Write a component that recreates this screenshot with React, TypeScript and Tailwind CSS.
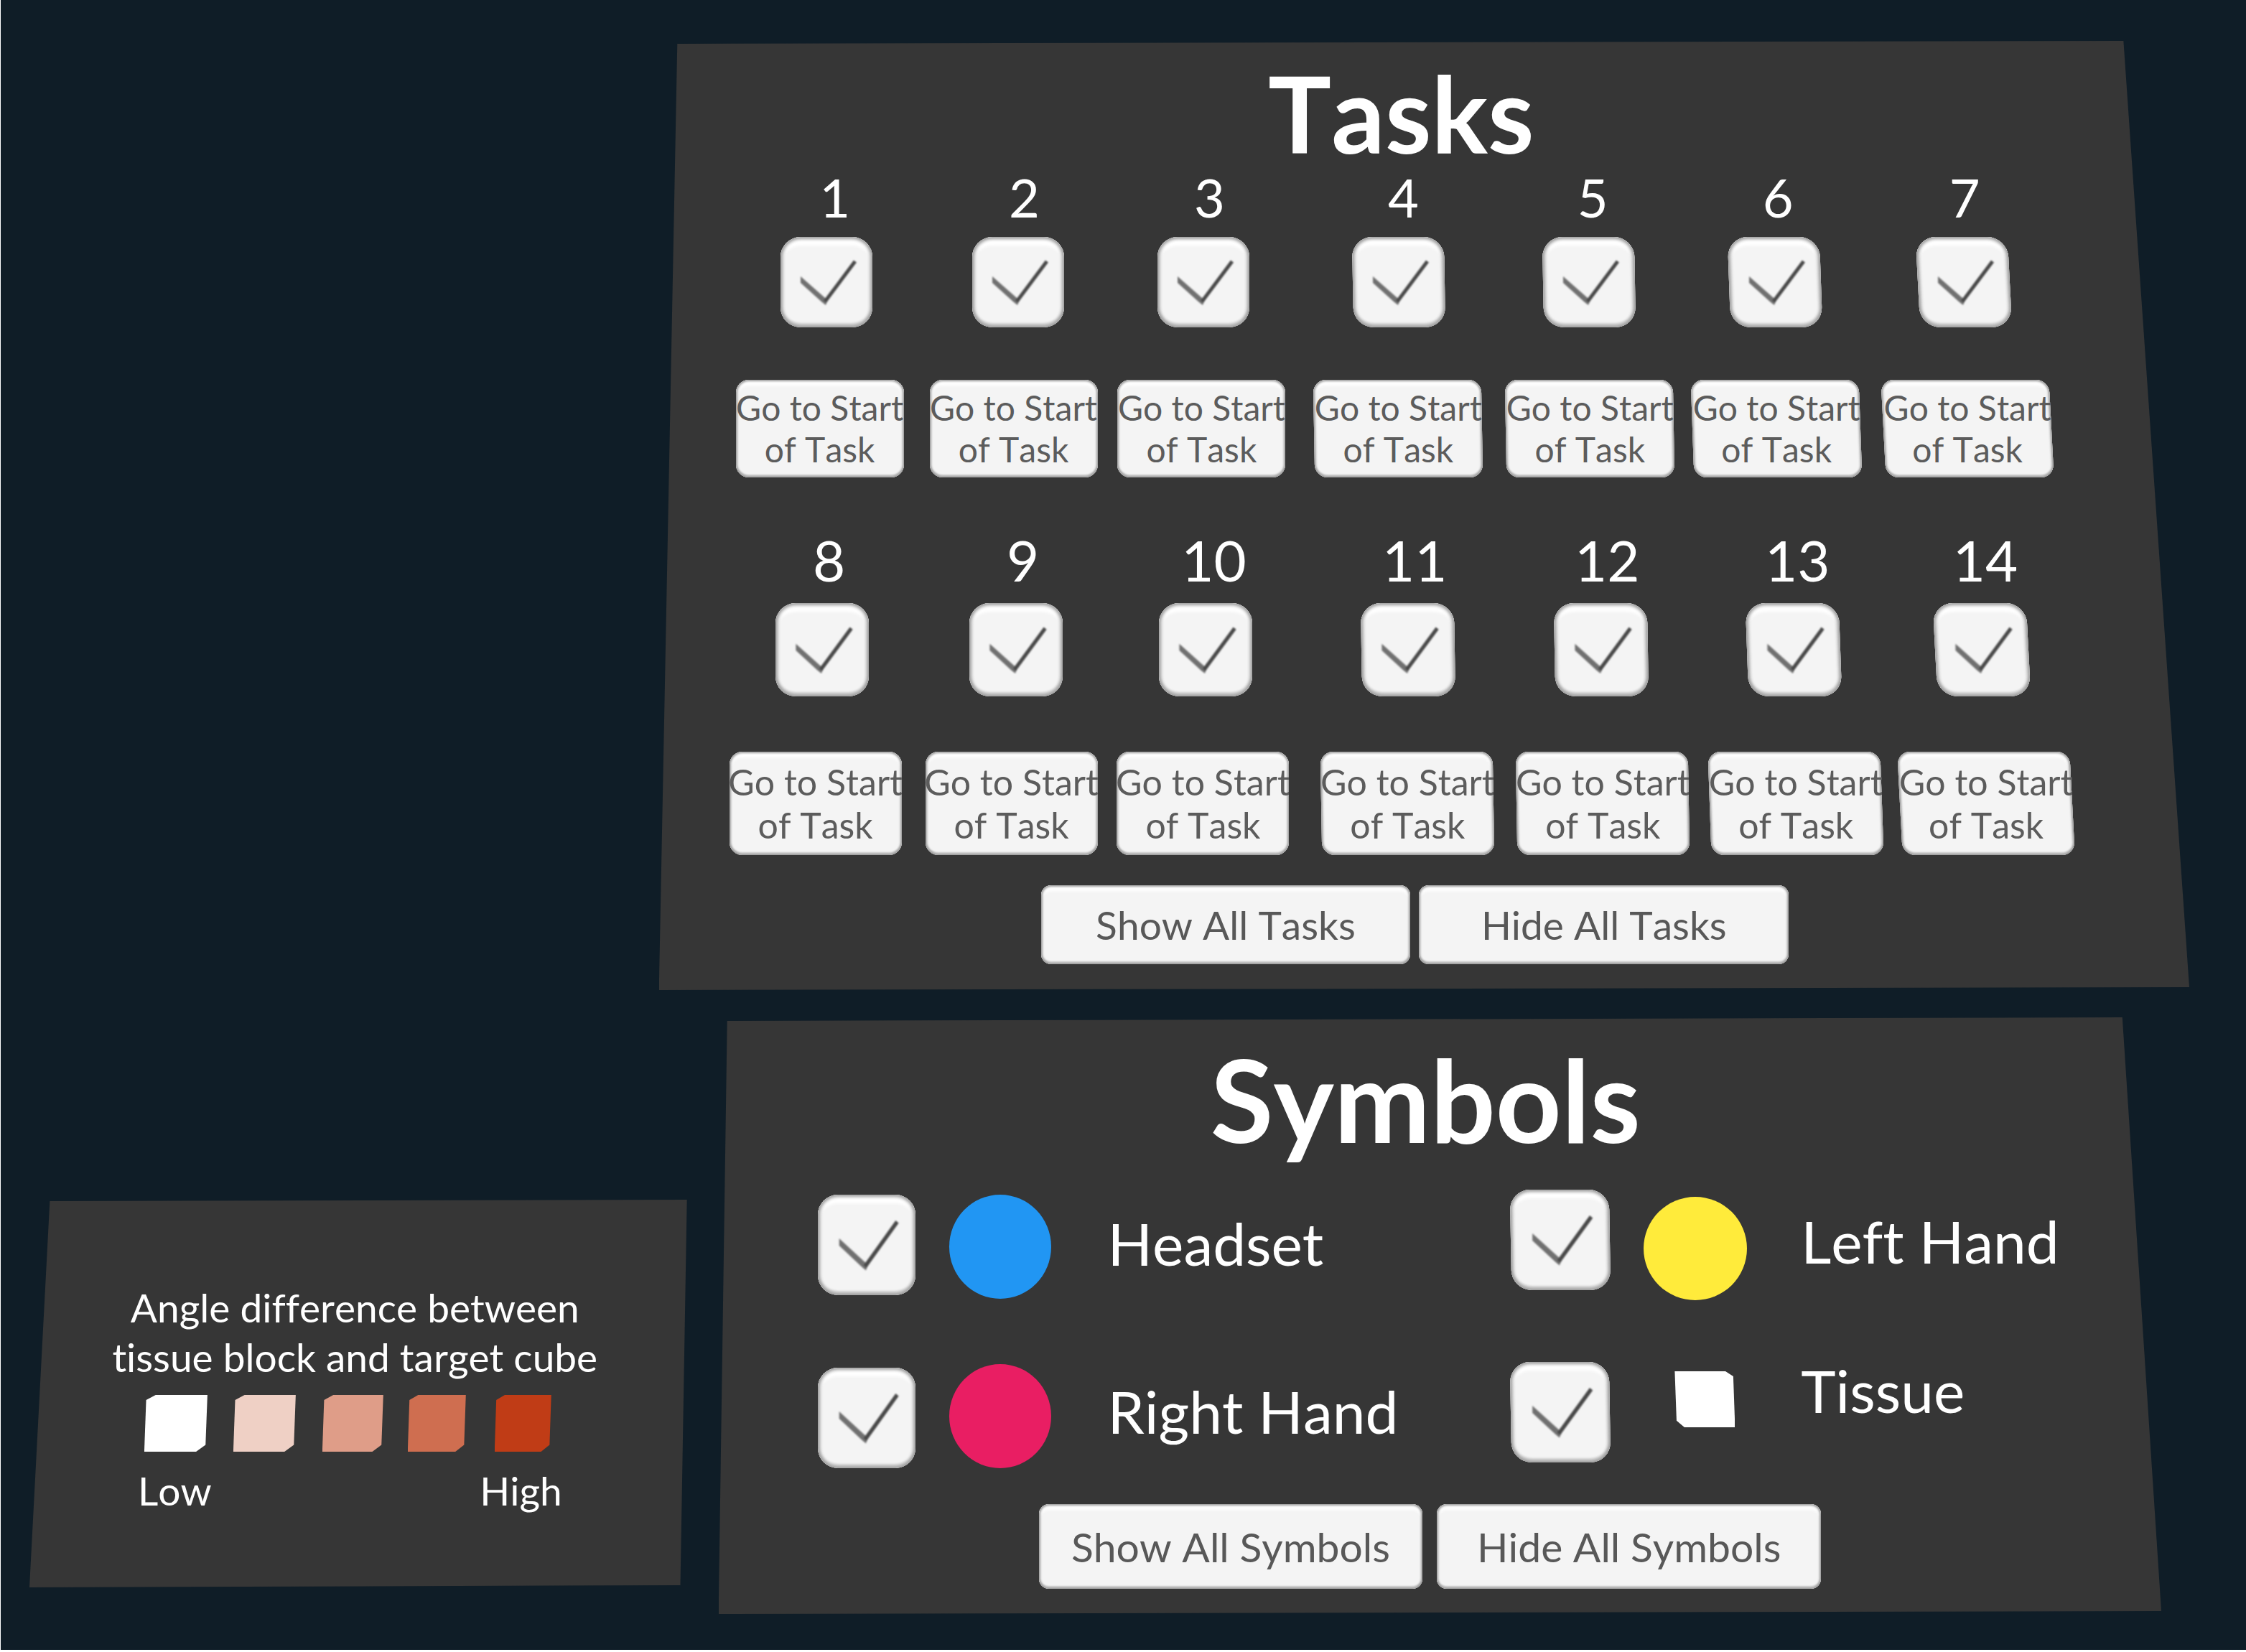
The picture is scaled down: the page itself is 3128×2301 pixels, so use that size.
import React, { useState } from "react";

const CELLS = [
  "col-start-2",
  "col-start-4",
  "col-start-6",
  "col-start-8",
  "col-start-10",
  "col-start-12",
  "col-start-14",
];

// Lean of each column's key caps, growing towards the right edge of the board.
const LEANS = [
  "skew-x-0",
  "skew-x-0",
  "skew-x-0",
  "skew-x-1",
  "skew-x-1",
  "skew-x-2",
  "skew-x-3",
];

const CAP =
  "bg-[#f4f4f4] shadow-[inset_0_0_3px_2px_#9c9c9c,inset_0_-4px_2px_#d4d4d4,inset_0_8px_4px_#ffffff]";
const SOFT_CAP =
  "bg-[#f4f4f4] shadow-[inset_0_0_4px_3px_#9c9c9c,inset_0_-6px_3px_#dcdcdc,inset_0_12px_4px_#ffffff]";

function CheckBox({
  id,
  checked,
  onChange,
  className = "",
  lean = "skew-x-0",
}: {
  id: string;
  checked: boolean;
  onChange: () => void;
  className?: string;
  lean?: string;
}) {
  return (
    <span className={`grid ${className}`}>
      <input
        id={id}
        type="checkbox"
        checked={checked}
        onChange={onChange}
        className={`col-start-1 row-start-1 size-full cursor-pointer appearance-none rounded-[28px] ${SOFT_CAP} ${lean}`}
      />
      {checked && (
        <svg
          viewBox="0 0 128 126"
          preserveAspectRatio="none"
          aria-hidden="true"
          className="pointer-events-none relative col-start-1 row-start-1 size-full blur-[1px]"
        >
          <path d="M28 55 L61 84 L66 88 L63 95 L58 91 L28 64 Z" fill="#707070" />
          <path d="M62 90 L104 34" stroke="#484848" strokeWidth="5" fill="none" />
        </svg>
      )}
    </span>
  );
}

function GoButton({ className, lean }: { className: string; lean: string }) {
  return (
    <button type="button" className={`grid cursor-pointer ${className}`}>
      <span className={`col-start-1 row-start-1 rounded-[18px] ${CAP} ${lean}`} />
      <span className="relative col-start-1 row-start-1 flex flex-col items-center justify-center overflow-hidden whitespace-nowrap text-[#5c5c5c]">
        <span>Go to Start</span>
        <span>of Task</span>
      </span>
    </button>
  );
}

function WideButton({
  children,
  onClick,
  className,
}: {
  children: React.ReactNode;
  onClick: () => void;
  className: string;
}) {
  return (
    <button
      type="button"
      onClick={onClick}
      className={`cursor-pointer rounded-[14px] whitespace-nowrap text-[#585858] ${CAP} ${className}`}
    >
      {children}
    </button>
  );
}

const TASK_ROWS = [
  {
    first: 1,
    numbers:
      "text-[74px] leading-[88px] grid-cols-[185fr_120fr_144fr_120fr_138fr_120fr_150fr_120fr_144fr_120fr_138fr_120fr_140fr_120fr_253fr]",
    checks:
      "mt-[11px] grid-cols-[169fr_128fr_139fr_128fr_131fr_128fr_144fr_128fr_137fr_128fr_131fr_128fr_135fr_128fr_250fr]",
    check: "h-[126px]",
    buttons:
      "mt-[73px] text-[48px] leading-[58px] grid-cols-[107fr_234fr_36fr_234fr_28fr_234fr_40fr_234fr_33fr_234fr_26fr_234fr_32fr_234fr_192fr]",
    button: "h-[136px]",
  },
  {
    first: 8,
    numbers:
      "mt-[69px] text-[78px] leading-[92px] grid-cols-[177fr_120fr_150fr_120fr_146fr_120fr_160fr_120fr_148fr_120fr_145fr_120fr_142fr_120fr_224fr]",
    checks:
      "mt-[14px] grid-cols-[162fr_130fr_140fr_130fr_135fr_130fr_152fr_130fr_139fr_130fr_138fr_130fr_132fr_130fr_224fr]",
    check: "h-[130px]",
    buttons:
      "mt-[77px] text-[50px] leading-[60px] grid-cols-[98fr_240fr_33fr_240fr_27fr_240fr_45fr_240fr_32fr_240fr_29fr_240fr_25fr_240fr_163fr]",
    button: "h-[144px]",
  },
];

function TasksPanel() {
  const [shown, setShown] = useState<boolean[]>(Array(14).fill(true));
  const toggle = (n: number) =>
    setShown((all) => all.map((v, i) => (i === n ? !v : v)));

  return (
    <section className="col-start-2 flex flex-col bg-[#363636] pt-[26px] pb-[36px] [clip-path:polygon(1.2%_4px,95.7%_0,100%_calc(100%_-_4px),0_100%)]">
      <h2 className="pr-[3%] text-center text-[147px] leading-[148px] font-bold">Tasks</h2>
      {TASK_ROWS.map((row) => (
        <React.Fragment key={row.first}>
          <div className={`grid ${row.numbers}`}>
            {CELLS.map((cell, i) => (
              <label
                key={cell}
                htmlFor={`task-${row.first + i}`}
                className={`text-center ${cell}`}
              >
                {row.first + i}
              </label>
            ))}
          </div>
          <div className={`grid ${row.checks}`}>
            {CELLS.map((cell, i) => (
              <CheckBox
                key={cell}
                id={`task-${row.first + i}`}
                checked={shown[row.first + i - 1]}
                onChange={() => toggle(row.first + i - 1)}
                className={`${cell} ${row.check}`}
                lean={LEANS[i]}
              />
            ))}
          </div>
          <div className={`grid ${row.buttons}`}>
            {CELLS.map((cell, i) => (
              <GoButton key={cell} className={`${cell} ${row.button}`} lean={LEANS[i]} />
            ))}
          </div>
        </React.Fragment>
      ))}
      <div className="mt-[42px] grid grid-cols-[532fr_515fr_12fr_515fr_558fr] text-[55px] leading-[66px]">
        <WideButton className="col-start-2 h-[110px]" onClick={() => setShown(Array(14).fill(true))}>
          Show All Tasks
        </WideButton>
        <WideButton className="col-start-4 h-[110px]" onClick={() => setShown(Array(14).fill(false))}>
          Hide All Tasks
        </WideButton>
      </div>
    </section>
  );
}

const SWATCHES = [
  "col-start-2 bg-white",
  "col-start-4 bg-[#efd0c5]",
  "col-start-6 bg-[#df9d88]",
  "col-start-8 bg-[#cf6e50]",
  "col-start-10 bg-[#c03c16]",
];

function LegendPanel() {
  return (
    <section className="col-start-2 mb-[37px] flex h-[540px] flex-col self-end bg-[#363636] pt-[116px] text-[55px] leading-[69px] [clip-path:polygon(3.1%_2px,100%_0,99%_calc(100%_-_3px),0_100%)]">
      <p className="pr-[1%] text-center">
        Angle difference between
        <br />
        tissue block and target cube
      </p>
      <div className="mt-[18px] grid grid-cols-[160fr_88fr_36fr_87fr_37fr_85fr_34fr_81fr_40fr_79fr_189fr]">
        {SWATCHES.map((swatch) => (
          <span
            key={swatch}
            className={`h-[79px] [clip-path:polygon(18%_0,100%_0,97%_88%,82%_100%,0_100%,3%_9%)] ${swatch}`}
          />
        ))}
      </div>
      <div className="mt-[20px] flex justify-between pr-[19%] pl-[16.5%]">
        <span>Low</span>
        <span>High</span>
      </div>
    </section>
  );
}

const SYMBOLS = ["Headset", "Right Hand", "Left Hand", "Tissue"];

function SymbolsPanel() {
  const [shown, setShown] = useState<boolean[]>(Array(4).fill(true));
  const toggle = (n: number) =>
    setShown((all) => all.map((v, i) => (i === n ? !v : v)));
  const check = (n: number, lean: string) => (
    <CheckBox
      id={`symbol-${n}`}
      checked={shown[n]}
      onChange={() => toggle(n)}
      className="h-[140px]"
      lean={lean}
    />
  );
  const label = (n: number) => (
    <label htmlFor={`symbol-${n}`} className="whitespace-nowrap">
      {SYMBOLS[n]}
    </label>
  );

  return (
    <section className="col-start-4 flex flex-col bg-[#363636] pt-[23px] pb-[35px] [clip-path:polygon(0.6%_5px,97.3%_0,100%_calc(100%_-_4px),0_100%)]">
      <h2 className="pr-[2%] text-center text-[160px] leading-[180px] font-bold">Symbols</h2>
      <div className="mt-[37px] grid grid-cols-[138fr_136fr_47fr_142fr_79fr_456fr_106fr_138fr_47fr_144fr_75fr_502fr] text-[82px] leading-[98px]">
        <div className="col-start-2 flex flex-col gap-[101px] pt-[7px]">
          {check(0, "skew-x-0")}
          {check(1, "skew-x-0")}
        </div>
        <div className="col-start-4 flex flex-col gap-[91px] pt-[7px]">
          <span className="h-[145px] rounded-[50%] bg-[#2196f3]" />
          <span className="h-[145px] rounded-[50%] bg-[#e91e63]" />
        </div>
        <div className="col-start-6 flex flex-col gap-[136px] pt-[25px]">
          {label(0)}
          {label(1)}
        </div>
        <div className="col-start-8 flex flex-col gap-[100px]">
          {check(2, "skew-x-1")}
          {check(3, "skew-x-1")}
        </div>
        <div className="col-start-10 flex flex-col gap-[99px] pt-[10px]">
          <span className="h-[144px] rounded-[50%] bg-[#ffeb3b]" />
          <span className="ml-[30%] h-[78px] w-[84px] bg-white [clip-path:polygon(0_0,84%_0,97%_9%,100%_100%,16%_100%,3%_88%)]" />
        </div>
        <div className="col-start-12 flex flex-col gap-[110px] pt-[22px]">
          {label(2)}
          {label(3)}
        </div>
      </div>
      <div className="mt-[50px] grid grid-cols-[446fr_535fr_20fr_535fr_474fr] text-[57px] leading-[66px]">
        <WideButton className="col-start-2 h-[118px]" onClick={() => setShown(Array(4).fill(true))}>
          Show All Symbols
        </WideButton>
        <WideButton className="col-start-4 h-[118px]" onClick={() => setShown(Array(4).fill(false))}>
          Hide All Symbols
        </WideButton>
      </div>
    </section>
  );
}

export default function App() {
  return (
    <main className="min-h-screen border-b-3 border-l border-white bg-[#0f1d27] pt-[57px] font-['Lato',sans-serif] text-white [font-kerning:none] [font-variant-ligatures:none]">
      <div className="grid grid-cols-[917fr_2132fr_79fr]">
        <TasksPanel />
      </div>
      <div className="mt-[38px] grid grid-cols-[40fr_916fr_44fr_2010fr_118fr]">
        <LegendPanel />
        <SymbolsPanel />
      </div>
    </main>
  );
}
